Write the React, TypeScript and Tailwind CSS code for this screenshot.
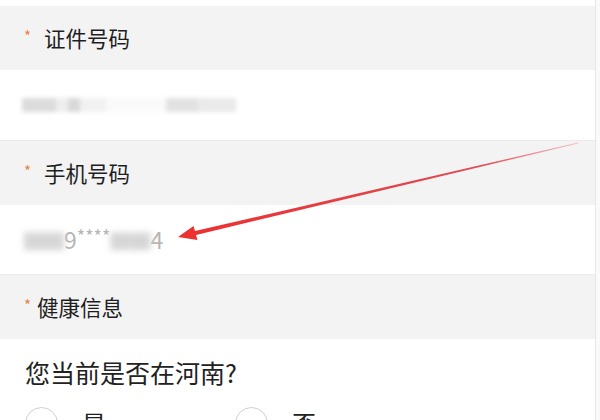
import React from 'react';

const font = { fontFamily: '"Noto Sans CJK SC", "Noto Sans", sans-serif' };

function LabelRow({ text, tight }: { text: string; tight?: boolean }) {
  return (
    <div className="h-[64px] shrink-0 flex items-center bg-[#f3f3f3] pl-[24px]">
      <span className={`text-[15px] text-[#e9834a] leading-none -mt-[6px] ${tight ? 'mr-[6px]' : 'mr-[13px]'}`}>*</span>
      <span className="text-[21.5px] text-[#1e1e1e]">{text}</span>
    </div>
  );
}

function Radio({ label }: { label: string }) {
  return (
    <div className="flex items-start gap-[24px]">
      <div className="w-[33px] h-[33px] rounded-full border border-[#cfcfcf]" />
      <span className="text-[24px] text-[#222] leading-none mt-[4px]">{label}</span>
    </div>
  );
}

export default function App() {
  return (
    <div className="relative w-[600px] h-[420px] overflow-hidden bg-white flex" style={font}>
      <div className="w-[595px] flex flex-col">
        <div className="h-[6px] shrink-0 bg-white" />
        <LabelRow text="证件号码" />
        <div className="h-[71px] shrink-0 flex items-center pl-[22px] border-b border-[#ececec]">
          <div className="flex items-center h-[16px] blur-[2px]">
            <div className="w-[34px] h-[14px] bg-[#dcdcdc]" />
            <div className="w-[12px] h-[14px] bg-[#eeeeee]" />
            <div className="w-[12px] h-[14px] bg-[#d9d9d9]" />
            <div className="w-[26px] h-[14px] bg-[#f1f1f1]" />
            <div className="w-[60px] h-[14px] bg-[#fafafa]" />
            <div className="w-[32px] h-[14px] bg-[#e2e2e2]" />
            <div className="w-[38px] h-[14px] bg-[#eaeaea]" />
          </div>
        </div>
        <LabelRow text="手机号码" />
        <div className="h-[70px] shrink-0 flex items-center pl-[24px] border-b border-[#ececec] text-[23px] text-[#b5b5b5] leading-none">
          <span className="blur-[3px] text-[#d6d6d6] text-[20px]">▇▇</span>
          <span>9</span>
          <span className="text-[18px] -mt-[10px]">****</span>
          <span className="blur-[3px] text-[#d6d6d6] text-[20px]">▇▇</span>
          <span>4</span>
        </div>
        <LabelRow text="健康信息" tight />
        <div className="flex-1 pl-[25px] pt-[17px]">
          <div className="text-[25px] text-[#222] leading-[32px]">您当前是否在河南?</div>
          <div className="flex gap-[129px] mt-[19px]">
            <Radio label="是" />
            <Radio label="否" />
          </div>
        </div>
      </div>
      <div className="flex-1 border-l border-[#e6e6e6] bg-[#fafafa]" />
      <svg className="absolute inset-0 pointer-events-none" width="600" height="420" viewBox="0 0 600 420">
        <defs>
          <linearGradient id="ar" x1="578" y1="143" x2="178" y2="237" gradientUnits="userSpaceOnUse">
            <stop offset="0" stopColor="#f3c4c8" />
            <stop offset="0.25" stopColor="#e04a55" />
            <stop offset="1" stopColor="#ec3030" />
          </linearGradient>
        </defs>
        <polygon
          points="178,237 193.5,226 195,231 578,142.6 578.2,143.4 196,235 197.5,240"
          fill="url(#ar)"
        />
      </svg>
    </div>
  );
}
